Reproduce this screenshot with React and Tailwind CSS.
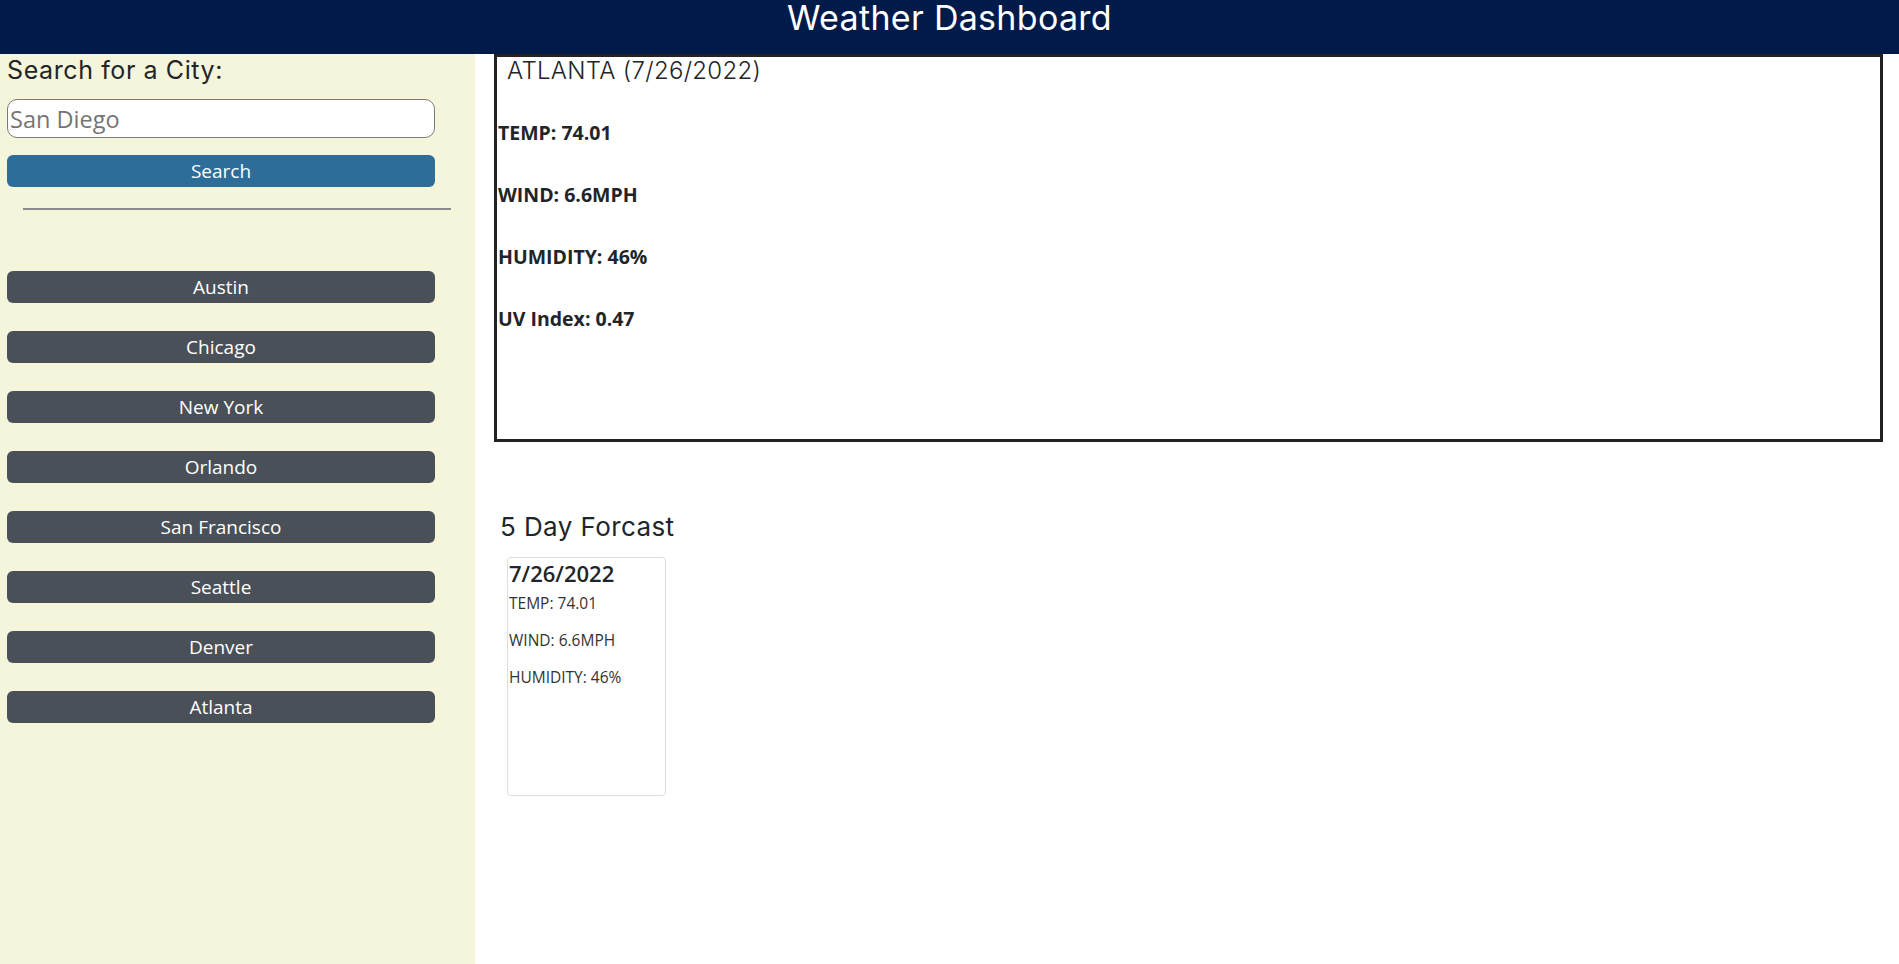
const cities = ["Austin", "Chicago", "New York", "Orlando", "San Francisco", "Seattle", "Denver", "Atlanta"];

const App = () => {
  return (
    <div className="min-h-screen flex flex-col bg-white text-[#212529] font-['Open_Sans',sans-serif]">
      <header className="h-[54px] bg-[#001a4a] flex justify-center">
        <h1 className="text-[34px] leading-[36px] text-white font-['Inter',sans-serif] font-normal tracking-[0.3px]">
          Weather Dashboard
        </h1>
      </header>

      <div className="flex flex-1">
        <aside className="w-[475px] min-h-[910px] bg-[#f5f5dc] pl-[7px] pr-[40px]">
          <h2 className="text-[25px] leading-[28px] mt-[2px] font-['Inter',sans-serif] font-normal tracking-[0.6px] text-[#212529]">
            Search for a City:
          </h2>
          <input
            type="text"
            placeholder="San Diego"
            className="mt-[15px] block w-[428px] h-[39px] rounded-[10px] border border-[#7a7a7a] bg-white px-[2px] text-[23.5px] placeholder:text-[#757575] outline-none"
          />
          <button className="mt-[17px] block w-[428px] h-[32px] rounded-[6px] bg-[#2c6e99] text-white text-[19px]">
            Search
          </button>
          <div className="mt-[21px] ml-[16px] w-[428px] h-[2px] bg-[#8a8a8a]"></div>
          <div className="mt-[61px] flex flex-col gap-[28px]">
            {cities.map((city) => (
              <button
                key={city}
                className="block w-[428px] h-[32px] rounded-[6px] bg-[#4a5058] text-white text-[19px]"
              >
                {city}
              </button>
            ))}
          </div>
        </aside>

        <main className="flex-1 pl-[19px] pr-[16px]">
          <section className="h-[388px] border-[3px] border-[#222] px-[1px]">
            <h2 className="ml-[9px] mt-[0px] text-[24px] leading-[28px] font-['Inter',sans-serif] font-light tracking-[0.3px] text-[#212529]">
              ATLANTA (7/26/2022)
            </h2>
            <div className="mt-[38px] flex flex-col gap-[42px] text-[19.5px] leading-[20px] font-bold">
              <p>TEMP: 74.01</p>
              <p>WIND: 6.6MPH</p>
              <p>HUMIDITY: 46%</p>
              <p>UV Index: 0.47</p>
            </div>
          </section>

          <h3 className="mt-[70px] ml-[6px] text-[26px] leading-[30px] font-['Inter',sans-serif] font-normal tracking-[0.4px]">
            5 Day Forcast
          </h3>
          <div className="mt-[15px] ml-[13px] w-[159px] h-[239px] border border-[#dedede] rounded-[4px] pl-[1px]">
            <div className="text-[22px] leading-[26px] font-semibold mt-[2px]">7/26/2022</div>
            <div className="mt-[8px] flex flex-col gap-[19px] text-[15.5px] leading-[18px] text-[#333]">
              <p>TEMP: 74.01</p>
              <p>WIND: 6.6MPH</p>
              <p>HUMIDITY: 46%</p>
            </div>
          </div>
        </main>
      </div>
    </div>
  );
};

export default App;
